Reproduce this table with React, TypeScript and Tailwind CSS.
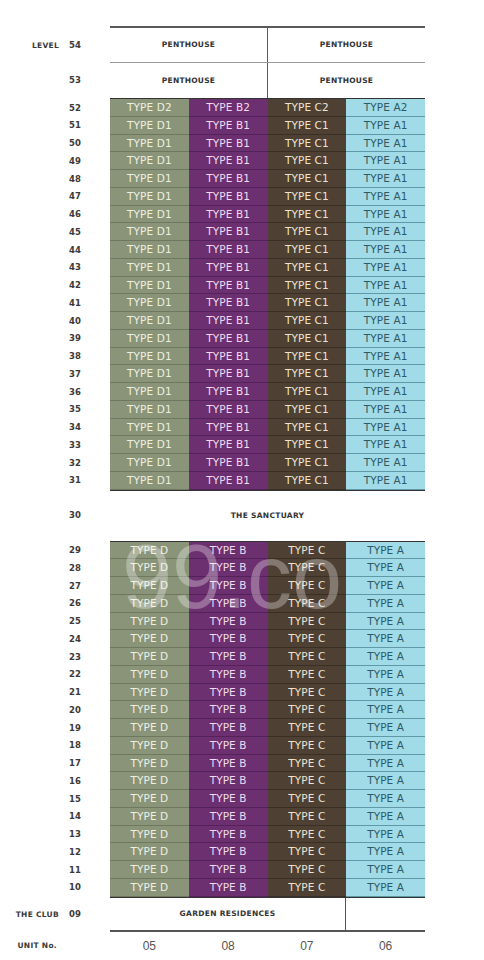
import React from "react";

const upper = Array.from({ length: 22 }, (_, i) => 52 - i);
const lower = Array.from({ length: 20 }, (_, i) => 29 - i);

const cols = [
  { bg: "bg-[#8a9479]", line: "border-[#6f785f]", text: "text-[#eef0e2]" },
  { bg: "bg-[#6c2f6f]", line: "border-[#55215a]", text: "text-[#f0dcef]" },
  { bg: "bg-[#4e4033]", line: "border-[#3a2f25]", text: "text-[#eee4d2]" },
  { bg: "bg-[#a0dbe7]", line: "border-[#5f99a7]", text: "text-[#2f5964]" },
];

function Label({ left, num }: { left?: string; num?: string }) {
  return (
    <div className="w-[110px] shrink-0 flex items-center justify-end pr-[30px] gap-[10px] font-bold text-[#3a3a3a]">
      {left ? <span className="text-[7.5px] tracking-[0.04em]">{left}</span> : null}
      {num ? <span className="text-[8.5px] w-[11px] text-right">{num}</span> : null}
    </div>
  );
}

function TypeRow({ level, names }: { level: number; names: string[] }) {
  return (
    <div className="flex h-[17.75px]">
      <Label num={String(level).padStart(2, "0")} />
      <div className="w-[315px] grid grid-cols-4">
        {names.map((n, i) => (
          <div
            key={i}
            className={`${cols[i].bg} ${cols[i].text} ${cols[i].line} border-b flex items-center justify-center text-[10.5px] leading-none tracking-[0.01em]`}
          >
            {n}
          </div>
        ))}
      </div>
    </div>
  );
}

function Rule({ cls }: { cls: string }) {
  return (
    <div className="flex">
      <div className="w-[110px]" />
      <div className={`w-[315px] ${cls}`} />
    </div>
  );
}

export default function App() {
  return (
    <div
      className="relative w-[484px] h-[960px] bg-white overflow-hidden"
      style={{ fontFamily: '"DejaVu Sans", "Liberation Sans", sans-serif' }}
    >
      <div className="pt-[26px]">
        {/* Penthouse */}
        <Rule cls="border-t-2 border-[#5a5a5a]" />
        <div className="flex h-[35px]">
          <Label left="LEVEL" num="54" />
          <div className="w-[315px] flex border-b border-[#9a9a9a]">
            <div className="flex-1 flex items-center justify-center border-r border-[#5a5a5a] text-[7.5px] font-bold tracking-[0.03em] text-[#333]">PENTHOUSE</div>
            <div className="flex-1 flex items-center justify-center text-[7.5px] font-bold tracking-[0.03em] text-[#333]">PENTHOUSE</div>
          </div>
        </div>
        <div className="flex h-[35px]">
          <Label num="53" />
          <div className="w-[315px] flex">
            <div className="flex-1 flex items-center justify-center border-r border-[#5a5a5a] text-[7.5px] font-bold tracking-[0.03em] text-[#333]">PENTHOUSE</div>
            <div className="flex-1 flex items-center justify-center text-[7.5px] font-bold tracking-[0.03em] text-[#333]">PENTHOUSE</div>
          </div>
        </div>

        {/* Upper block */}
        <Rule cls="border-t border-[#333]" />
        {upper.map((l) => (
          <TypeRow
            key={l}
            level={l}
            names={
              l === 52
                ? ["TYPE D2", "TYPE B2", "TYPE C2", "TYPE A2"]
                : ["TYPE D1", "TYPE B1", "TYPE C1", "TYPE A1"]
            }
          />
        ))}
        <Rule cls="border-t border-[#333]" />

        {/* Sanctuary */}
        <div className="flex h-[50px]">
          <Label num="30" />
          <div className="w-[315px] flex items-center justify-center text-[7.5px] font-bold tracking-[0.04em] text-[#333]">
            THE SANCTUARY
          </div>
        </div>

        {/* Lower block */}
        <Rule cls="border-t border-[#333]" />
        {lower.map((l) => (
          <TypeRow key={l} level={l} names={["TYPE D", "TYPE B", "TYPE C", "TYPE A"]} />
        ))}
        <Rule cls="border-t border-[#333]" />

        {/* Garden */}
        <div className="flex h-[34px]">
          <Label left="THE CLUB" num="09" />
          <div className="w-[315px] flex border-b-2 border-[#555]">
            <div className="w-[236px] flex items-center justify-center border-r border-[#555] text-[7.5px] font-bold tracking-[0.04em] text-[#333]">
              GARDEN RESIDENCES
            </div>
            <div className="flex-1" />
          </div>
        </div>

        {/* Unit No */}
        <div className="flex h-[28px]">
          <div className="w-[110px] shrink-0 flex items-center justify-end pr-[53px] text-[7.5px] font-bold tracking-[0.04em] text-[#3a3a3a]">
            UNIT No.
          </div>
          <div
            className="w-[315px] grid grid-cols-4 text-[12px] text-[#555]"
            style={{ fontFamily: '"Liberation Sans", sans-serif' }}
          >
            {["05", "08", "07", "06"].map((u) => (
              <div key={u} className="flex items-center justify-center">
                {u}
              </div>
            ))}
          </div>
        </div>
      </div>

      {/* watermark */}
      <div
        className="absolute left-[122px] top-[532px] text-[90px] leading-none text-white/30 pointer-events-none select-none"
        style={{ fontFamily: '"Liberation Sans", sans-serif' }}
      >
        99.co
      </div>
    </div>
  );
}
